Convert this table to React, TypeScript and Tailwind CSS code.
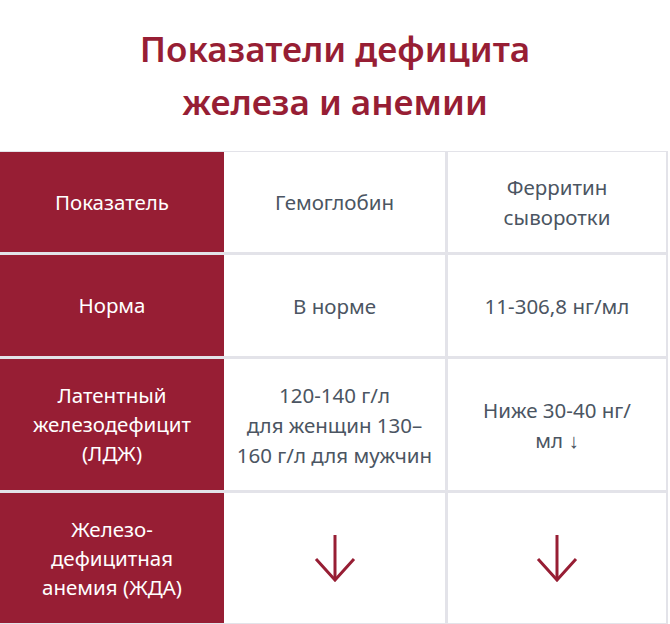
import React from "react";

const RED = "bg-[#971e34]";

function BigArrow() {
  return (
    <svg width="44" height="50" viewBox="0 0 44 50" fill="none">
      <path d="M22 2 V47" stroke="#971e34" strokeWidth="3" />
      <path d="M3 26 L22 47 L41 26" stroke="#971e34" strokeWidth="3" fill="none" />
    </svg>
  );
}

export default function App() {
  const redCell =
    `${RED} flex items-center justify-center text-center text-white text-[20.5px] leading-[29px]`;
  const whiteCell =
    "bg-white flex items-center justify-center text-center text-[#4b5562] text-[20.5px] leading-[30px] px-1";
  return (
    <div
      className="w-[670px] h-[624px] bg-white overflow-hidden"
      style={{ fontFamily: '"Noto Sans", "Open Sans", sans-serif' }}
    >
      <div className="h-[151px] pt-[22px] text-center text-[#971e34] font-semibold text-[35px] leading-[53px]">
        Показатели дефицита
        <br />
        железа и анемии
      </div>
      <div className="w-[668px] bg-[#e3e3e9] pt-[1px] pb-[2px] pr-[2px]">
        <div className="grid grid-cols-[224px_221px_221px] gap-y-[3px]">
          <div className={`${redCell} h-[100px]`}>Показатель</div>
          <div className={`${whiteCell} h-[100px]`}>Гемоглобин</div>
          <div className={`${whiteCell} h-[100px] ml-[3px]`}>
            Ферритин
            <br />
            сыворотки
          </div>

          <div className={`${redCell} h-[101px]`}>Норма</div>
          <div className={`${whiteCell} h-[101px]`}>В норме</div>
          <div className={`${whiteCell} h-[101px] ml-[3px]`}>11-306,8 нг/мл</div>

          <div className={`${redCell} h-[131px]`}>
            Латентный
            <br />
            железодефицит
            <br />
            (ЛДЖ)
          </div>
          <div className={`${whiteCell} h-[131px]`}>
            120-140 г/л
            <br />
            для женщин 130–
            <br />
            160 г/л для мужчин
          </div>
          <div className={`${whiteCell} h-[131px] ml-[3px]`}>
            Ниже 30-40 нг/
            <br />
            мл ↓
          </div>

          <div className={`${redCell} h-[130px]`}>
            Железо-
            <br />
            дефицитная
            <br />
            анемия (ЖДА)
          </div>
          <div className={`${whiteCell} h-[130px]`}>
            <BigArrow />
          </div>
          <div className={`${whiteCell} h-[130px] ml-[3px]`}>
            <BigArrow />
          </div>
        </div>
      </div>
    </div>
  );
}
